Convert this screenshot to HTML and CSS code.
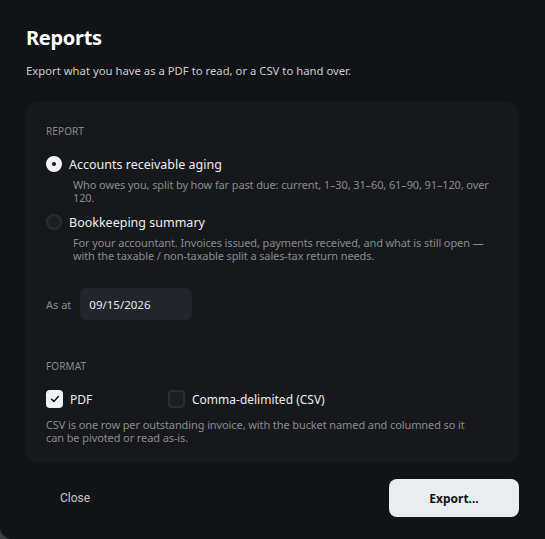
FILE: index.html
```html
<!DOCTYPE html>
<html>
<head>
<meta charset="utf-8">
<link rel="stylesheet" href="styles.css">
</head>
<body>
<div class="dialog">
  <h1 class="title">Reports</h1>
  <p class="subtitle">Export what you have as a PDF to read, or a CSV to hand over.</p>
  <div class="card">
    <div class="section-label">REPORT</div>
    <div class="option first">
      <div class="option-row">
        <span class="radio checked"><span class="dot"></span></span>
        <span class="option-title">Accounts receivable aging</span>
      </div>
      <div class="option-desc">Who owes you, split by how far past due: current, 1–30, 31–60, 61–90, 91–120, over 120.</div>
    </div>
    <div class="option second">
      <div class="option-row">
        <span class="radio"></span>
        <span class="option-title">Bookkeeping summary</span>
      </div>
      <div class="option-desc">For your accountant. Invoices issued, payments received, and what is still open — with the taxable / non-taxable split a sales-tax return needs.</div>
    </div>
    <div class="asat">
      <span class="asat-label">As at</span>
      <span class="date-input">09/15/2026</span>
    </div>
    <div class="section-label format-label">FORMAT</div>
    <div class="checks">
      <label class="check-item pdf">
        <span class="checkbox checked"><svg viewBox="0 0 16 16" width="12" height="12"><path d="M3.5 8.3 L6.5 11.2 L12.5 4.8" fill="none" stroke="#111317" stroke-width="2" stroke-linecap="round" stroke-linejoin="round"/></svg></span>
        <span class="check-text">PDF</span>
      </label>
      <label class="check-item">
        <span class="checkbox"></span>
        <span class="check-text">Comma-delimited (CSV)</span>
      </label>
    </div>
    <div class="format-desc">CSV is one row per outstanding invoice, with the bucket named and columned so it can be pivoted or read as-is.</div>
  </div>
  <div class="footer">
    <button class="btn-close">Close</button>
    <button class="btn-export">Export...</button>
  </div>
</div>
</body>
</html>
```

FILE: styles.css
```css
html, body {
  margin: 0;
  padding: 0;
  background: #3a3d44;
  width: 545px;
  height: 539px;
  overflow: hidden;
}
.dialog {
  box-sizing: border-box;
  width: 560px;
  height: 539px;
  background: #111317;
  border-bottom-left-radius: 12px;
  padding: 24px 28px 0 26px;
  font-family: "Noto Sans", "Open Sans", sans-serif;
  color: #e8e9ec;
}
.title {
  margin: 0;
  font-size: 20px;
  font-weight: 700;
  line-height: 28px;
  letter-spacing: -0.3px;
  color: #ffffff;
}
.subtitle {
  margin: 11px 0 0 0;
  font-size: 11.3px;
  line-height: 16px;
  color: #c9ccd1;
}
.card {
  width: 492px;
  box-sizing: border-box;
  margin-top: 22px;
  background: #16181c;
  border-radius: 12px;
  padding: 23px 20px 19px 20px;
}
.section-label {
  font-size: 10px;
  line-height: 14px;
  color: #85888e;
  letter-spacing: 0.1px;
}
.option-row {
  display: flex;
  align-items: center;
  gap: 7px;
  height: 20px;
}
.option.first { margin-top: 16px; }
.option.second { margin-top: 8px; }
.radio {
  box-sizing: border-box;
  width: 16px;
  height: 16px;
  border-radius: 50%;
  background: #1c1e23;
  border: 2px solid #2a2d33;
  display: flex;
  align-items: center;
  justify-content: center;
  flex: none;
}
.radio.checked { background: #f2f3f5; border-color: #f2f3f5; }
.radio .dot {
  width: 4px;
  height: 4px;
  border-radius: 50%;
  background: #111317;
}
.option-title {
  font-size: 12.5px;
  color: #eceef0;
}
.option-desc {
  margin: 4px -8px 0 27px;
  font-size: 11px;
  line-height: 13px;
  letter-spacing: -0.12px;
  color: #868a91;
}
.asat {
  display: flex;
  align-items: center;
  gap: 9px;
  margin-top: 26px;
}
.asat-label {
  font-size: 11px;
  color: #868a91;
}
.date-input {
  box-sizing: border-box;
  width: 112px;
  height: 32px;
  border-radius: 6px;
  background: #22252b;
  display: flex;
  align-items: center;
  padding-left: 9px;
  font-size: 11.5px;
  color: #e3e8ef;
}
.format-label {
  margin-top: 39px;
}
.checks {
  display: flex;
  align-items: center;
  margin-top: 17px;
  height: 18px;
}
.check-item {
  display: flex;
  align-items: center;
  gap: 7px;
}
.check-item.pdf { width: 122px; }
.checkbox {
  box-sizing: border-box;
  width: 17px;
  height: 18px;
  border-radius: 4px;
  background: #1c1e23;
  border: 2px solid #2a2d33;
  display: flex;
  align-items: center;
  justify-content: center;
  flex: none;
}
.checkbox.checked { background: #f2f3f5; border-color: #f2f3f5; }
.check-text {
  font-size: 12px;
  color: #eceef0;
}
.format-desc {
  margin-top: 10px;
  font-size: 11px;
  line-height: 13px;
  letter-spacing: -0.1px;
  color: #868a91;
  padding-right: 30px;
}
.footer {
  display: flex;
  justify-content: space-between;
  align-items: center;
  width: 493px;
  margin-top: 16px;
}
.btn-close {
  background: none;
  border: none;
  font-family: Roboto, sans-serif;
  font-size: 12px;
  color: #c3c7cd;
  padding: 0 0 0 34px;
}
.btn-export {
  width: 130px;
  height: 38px;
  border: none;
  border-radius: 8px;
  background: #ebecee;
  color: #111317;
  font-family: "Noto Sans", sans-serif;
  font-weight: 700;
  font-size: 12px;
}
```
